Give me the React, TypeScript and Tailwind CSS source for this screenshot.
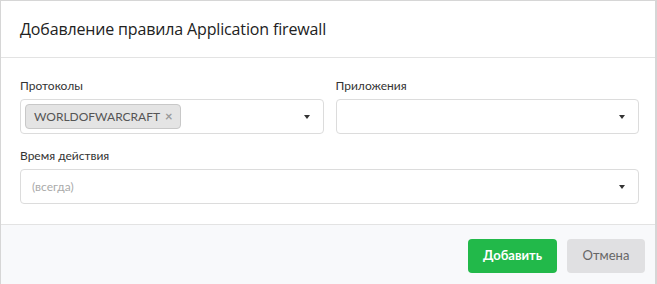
export default function App() {
  return (
    <div className="w-[657px] h-[284px] overflow-hidden bg-white" style={{ fontFamily: "Lato, 'Open Sans', sans-serif" }}>
      <div className="h-full border-t border-l border-r-2 border-[#d6d6d6] flex flex-col">
        {/* Заголовок */}
        <div className="h-[57px] border-b border-[#e3e3e3] flex items-center pl-[19px]">
          <h2 className="text-[16px] text-[#222] tracking-[-0.15px]" style={{ fontFamily: "'Open Sans', sans-serif" }}>
            Добавление правила Application firewall
          </h2>
        </div>

        {/* Форма */}
        <div className="pl-[19px] pr-[16px] pt-[20px] pb-[20px] bg-white">
          <div className="grid grid-cols-2 gap-x-[12px]">
            <div>
              <label className="block text-[12px] text-[#333] leading-[16px] mb-[5px]">Протоколы</label>
              <div className="h-[35px] border border-[#dcdcdc] rounded-[4px] flex items-center pl-[4px] pr-[13px]">
                <span className="h-[25px] pl-[8px] pr-[7px] bg-[#e4e4e4] border border-[#c8c8c8] rounded-[4px] flex items-center gap-[5px] text-[12px] text-[#555]">
                  WORLDOFWARCRAFT
                  <span className="text-[#999] text-[13px] font-bold leading-none">×</span>
                </span>
                <span className="ml-auto w-0 h-0 border-l-[3px] border-r-[3px] border-t-[4px] border-l-transparent border-r-transparent border-t-[#333]" />
              </div>
            </div>
            <div>
              <label className="block text-[12px] text-[#333] leading-[16px] mb-[5px]">Приложения</label>
              <div className="h-[35px] border border-[#dcdcdc] rounded-[4px] flex items-center pr-[13px]">
                <span className="ml-auto w-0 h-0 border-l-[3px] border-r-[3px] border-t-[4px] border-l-transparent border-r-transparent border-t-[#333]" />
              </div>
            </div>
          </div>

          <label className="block text-[12px] text-[#333] leading-[16px] mt-[14px] mb-[5px]">Время действия</label>
          <div className="h-[35px] border border-[#dcdcdc] rounded-[4px] flex items-center pl-[11px] pr-[13px]">
            <span className="text-[12px] text-[#aaa]">(всегда)</span>
            <span className="ml-auto w-0 h-0 border-l-[3px] border-r-[3px] border-t-[4px] border-l-transparent border-r-transparent border-t-[#333]" />
          </div>
        </div>

        {/* Кнопки */}
        <div className="flex-1 border-t border-[#e3e3e3] bg-[#f8f9fb] flex justify-end items-start pt-[14px] pr-[10px] gap-[10px]">
          <button className="h-[34px] w-[89px] rounded-[4px] bg-[#22b94a] text-white text-[13px] font-bold">
            Добавить
          </button>
          <button className="h-[34px] w-[78px] rounded-[4px] bg-[#e0e0e2] text-[#666] text-[13px]">
            Отмена
          </button>
        </div>
      </div>
    </div>
  );
}
